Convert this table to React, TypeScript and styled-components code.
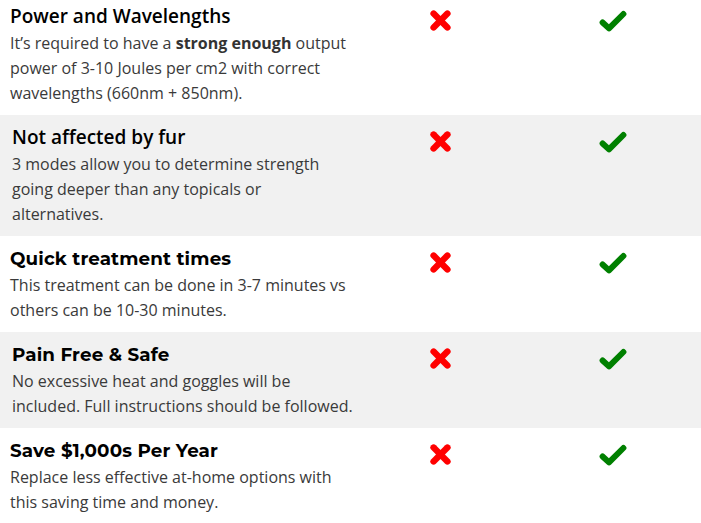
import React from "react";
import styled, { createGlobalStyle } from "styled-components";

const Global = createGlobalStyle`
  html, body { margin: 0; padding: 0; background: #ffffff; }
  body { font-family: "Open Sans", "Liberation Sans", sans-serif; overflow: hidden; }
`;

const Table = styled.div`
  width: 701px;
  margin-top: -6px;
  display: flex;
  flex-direction: column;
`;

const Row = styled.div<{ $shade: boolean }>`
  display: grid;
  grid-template-columns: 430px 169px 1fr;
  align-items: start;
  background: ${(p) => (p.$shade ? "#f1f1f1" : "#ffffff")};
  padding: 11px 0 9px 0;
`;

const TextCell = styled.div<{ $shade: boolean }>`
  padding-left: ${(p) => (p.$shade ? "12px" : "10px")};
  padding-right: 10px;
`;

const Heading = styled.h3<{ $alt: boolean }>`
  margin: 0 0 3px 0;
  font-family: ${(p) =>
    p.$alt
      ? `"Montserrat", "Inter", "DejaVu Sans", sans-serif`
      : `"Open Sans", "Liberation Sans", sans-serif`};
  font-weight: ${(p) => (p.$alt ? 700 : 600)};
  font-size: ${(p) => (p.$alt ? "18.3px" : "19px")};
  line-height: 23px;
  color: #000000;
  letter-spacing: ${(p) => (p.$alt ? "0.15px" : "0")};
`;

const Body = styled.p`
  margin: 0;
  font-family: "Open Sans", "Liberation Sans", sans-serif;
  font-size: 16px;
  line-height: 25px;
  color: #3a3a3a;
  strong { font-weight: 700; color: #333333; }
`;

const IconCell = styled.div`
  padding-top: 5px;
  display: flex;
`;

const Cross = () => (
  <svg width="21" height="21" viewBox="0 0 21 21">
    <g stroke="#ff0000" strokeWidth="6.4" strokeLinecap="round">
      <line x1="3.6" y1="3.6" x2="17.4" y2="17.4" />
      <line x1="17.4" y1="3.6" x2="3.6" y2="17.4" />
    </g>
  </svg>
);

const Check = () => (
  <svg width="28" height="22" viewBox="0 0 28 22">
    <polyline
      points="3.6,12.5 10,18.4 24.4,4"
      fill="none"
      stroke="#008000"
      strokeWidth="6"
      strokeLinecap="round"
      strokeLinejoin="round"
    />
  </svg>
);

type Item = { title: string; alt: boolean; body: React.ReactNode };

const items: Item[] = [
  {
    title: "Power and Wavelengths",
    alt: false,
    body: (
      <>
        It’s required to have a <strong>strong enough</strong> output
        <br />
        power of 3-10 Joules per cm2 with correct
        <br />
        wavelengths (660nm + 850nm).
      </>
    ),
  },
  {
    title: "Not affected by fur",
    alt: false,
    body: (
      <>
        3 modes allow you to determine strength
        <br />
        going deeper than any topicals or
        <br />
        alternatives.
      </>
    ),
  },
  {
    title: "Quick treatment times",
    alt: true,
    body: (
      <>
        This treatment can be done in 3-7 minutes vs
        <br />
        others can be 10-30 minutes.
      </>
    ),
  },
  {
    title: "Pain Free & Safe",
    alt: true,
    body: (
      <>
        No excessive heat and goggles will be
        <br />
        included. Full instructions should be followed.
      </>
    ),
  },
  {
    title: "Save $1,000s Per Year",
    alt: true,
    body: (
      <>
        Replace less effective at-home options with
        <br />
        this saving time and money.
      </>
    ),
  },
];

export default function App() {
  return (
    <>
      <Global />
      <Table>
        {items.map((it, i) => {
          const shade = i % 2 === 1;
          return (
            <Row key={it.title} $shade={shade}>
              <TextCell $shade={shade}>
                <Heading $alt={it.alt}>{it.title}</Heading>
                <Body>{it.body}</Body>
              </TextCell>
              <IconCell>
                <Cross />
              </IconCell>
              <IconCell>
                <Check />
              </IconCell>
            </Row>
          );
        })}
      </Table>
    </>
  );
}
